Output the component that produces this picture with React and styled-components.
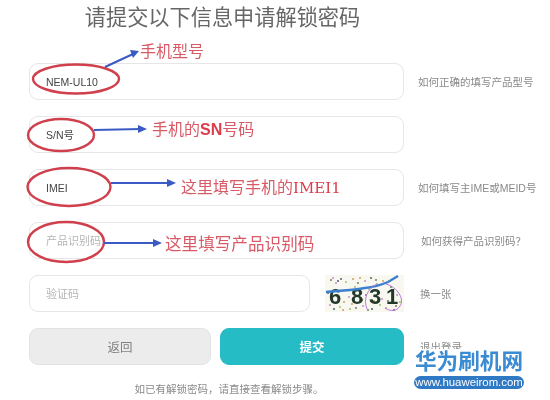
import React from 'react';
import styled, { createGlobalStyle } from 'styled-components';

const GlobalStyle = createGlobalStyle`
	html, body {
		margin: 0;
		padding: 0;
		background: #fff;
	}
	body {
		font-family: 'Liberation Sans', 'Noto Sans CJK SC', sans-serif;
	}
`;

const Page = styled.div`
	position: relative;
	width: 550px;
	height: 400px;
	overflow: hidden;
	background: #fff;
	filter: blur(0.35px);
`;

const Title = styled.h1`
	margin: 0;
	width: 445px;
	padding-top: 5px;
	height: 63px;
	box-sizing: border-box;
	text-align: center;
	font-size: 21.2px;
	line-height: 26px;
	font-weight: 400;
	color: #666;
`;

const Form = styled.form`
	display: flex;
	flex-direction: column;
	gap: 16px;
	padding-left: 29px;
`;

const Row = styled.div`
	display: flex;
	align-items: center;
	height: 37px;
`;

const Input = styled.input`
	box-sizing: border-box;
	width: ${(p) => p.$width || 375}px;
	height: 37px;
	padding: 0 16px;
	border: 1px solid #e6e6e6;
	border-radius: 9px;
	background: #fff;
	font-family: inherit;
	font-size: 10.5px;
	color: #444;
	outline: none;
	&::placeholder {
		color: #b5b5b5;
		font-size: 11px;
	}
`;

const Hint = styled.a`
	margin-left: ${(p) => p.$left || 14}px;
	font-size: 10.5px;
	color: #8a8a8a;
	white-space: nowrap;
`;

const Captcha = styled.svg`
	display: block;
	flex: none;
	margin-left: 15px;
	width: 79px;
	height: 37px;
`;

const Buttons = styled.div`
	display: flex;
	gap: 9px;
	align-items: center;
	height: 37px;
`;

const Button = styled.button`
	width: ${(p) => p.$width}px;
	height: 37px;
	padding: 0;
	border: 1px solid ${(p) => (p.$primary ? '#25bcc6' : '#e2e2e2')};
	border-radius: 9px;
	background: ${(p) => (p.$primary ? '#25bcc6' : '#ececec')};
	color: ${(p) => (p.$primary ? '#fff' : '#808080')};
	font-family: inherit;
	font-size: 12.5px;
	font-weight: ${(p) => (p.$primary ? 700 : 400)};
`;

const Note = styled.p`
	margin: 17px 0 0;
	width: 458px;
	text-align: center;
	font-size: 10.5px;
	line-height: 14px;
	color: #8a8a8a;
`;

const Markup = styled.svg`
	position: absolute;
	left: 0;
	top: 0;
	width: 550px;
	height: 400px;
	pointer-events: none;
`;

const Label = styled.span`
	position: absolute;
	left: ${(p) => p.$x}px;
	top: ${(p) => p.$y}px;
	font-size: ${(p) => p.$size || 16}px;
	line-height: 20px;
	color: #d85a66;
	white-space: nowrap;
`;

const Latin = styled.b`
	font-family: ${(p) => (p.$serif ? "'DejaVu Serif', 'Liberation Serif', serif" : "'Liberation Sans', sans-serif")};
	font-size: ${(p) => (p.$serif ? 15 : 16)}px;
	font-weight: ${(p) => (p.$serif ? 400 : 700)};
	color: #dc3c4c;
`;

const Watermark = styled.div`
	position: absolute;
	left: 414px;
	top: 349px;
	width: 110px;
	display: flex;
	flex-direction: column;
	align-items: center;
	background: #fff;
`;

const WatermarkName = styled.div`
	font-size: 21.6px;
	line-height: 25px;
	font-weight: 700;
	color: #3a8bd2;
	white-space: nowrap;
`;

const WatermarkUrl = styled.div`
	margin-top: 2px;
	width: 110px;
	height: 13px;
	border-radius: 7px;
	background: #2f78c4;
	color: #fff;
	font-size: 11.4px;
	line-height: 13px;
	text-align: center;
	white-space: nowrap;
`;

const rings = [
	{ cx: 76, cy: 79, rx: 43, ry: 14.5 },
	{ cx: 61, cy: 135, rx: 33, ry: 16 },
	{ cx: 69, cy: 187, rx: 41.5, ry: 19 },
	{ cx: 66, cy: 242, rx: 38, ry: 20 }
];

const arrows = [
	{ d: 'M105 67 L133 54', head: '139,51 130,50 133,58' },
	{ d: 'M94 130 L141 129', head: '147,129 138,125 138,133' },
	{ d: 'M111 183 L170 183', head: '176,183 167,179 167,187' },
	{ d: 'M104 243 L156 243', head: '162,243 153,239 153,247' }
];

const dots = [
	[6, 5], [11, 8], [16, 4], [21, 7], [28, 4], [33, 8], [40, 6], [46, 3], [52, 9], [58, 6], [66, 12],
	[5, 30], [9, 34], [15, 32], [27, 29], [31, 33], [38, 31], [47, 34], [55, 30], [61, 33], [71, 31],
	[24, 22], [37, 25], [44, 14], [49, 26], [63, 26], [72, 20], [3, 18], [30, 12], [19, 27], [41, 20],
	[8, 3], [13, 6], [25, 34], [35, 3], [43, 35], [57, 24], [69, 35], [75, 27], [18, 35], [51, 5]
];
const dotColors = ['#6f8458', '#c48fd0', '#4f6070', '#9cc46c', '#c8a060'];

const CaptchaImage = () => (
	<Captcha viewBox="0 0 79 37">
		<rect width="79" height="37" fill="#f8f8f1" />
		{dots.map(([x, y], i) => (
			<circle key={i} cx={x} cy={y} r="1" fill={dotColors[i % dotColors.length]} />
		))}
		<g fontFamily="'Liberation Sans', sans-serif" fontSize="22" fontWeight="700" fill="#22382a">
			<text x="4" y="29">6</text>
			<text x="26" y="29">8</text>
			<text x="44" y="29">3</text>
			<text x="61" y="29">1</text>
		</g>
		<path d="M1 17 C14 16 28 15 40 13 C50 12 56 10 63 7 L73 1" fill="none" stroke="#3a7fd0" strokeWidth="2.4" />
		<path d="M42 34 C38 24 42 14 52 9 M61 9 C72 12 80 24 75 31 C72 36 66 37 60 33" fill="none" stroke="#b67ad8" strokeWidth="1" />
	</Captcha>
);

const App = () => {
	return (
		<Page>
			<GlobalStyle />
			<Title>请提交以下信息申请解锁密码</Title>
			<Form>
				<Row>
					<Input defaultValue="NEM-UL10" />
					<Hint>如何正确的填写产品型号</Hint>
				</Row>
				<Row>
					<Input defaultValue="S/N号" />
				</Row>
				<Row>
					<Input defaultValue="IMEI" />
					<Hint>如何填写主IME或MEID号</Hint>
				</Row>
				<Row>
					<Input placeholder="产品识别码" />
					<Hint $left={17}>如何获得产品识别码？</Hint>
				</Row>
				<Row>
					<Input $width={281} placeholder="验证码" />
					<CaptchaImage />
					<Hint $left={16}>换一张</Hint>
				</Row>
				<Buttons>
					<Button type="button" $width={182}>返回</Button>
					<Button type="button" $width={184} $primary>提交</Button>
					<Hint $left={7}>退出登录</Hint>
				</Buttons>
			</Form>
			<Note>如已有解锁密码，请直接查看解锁步骤。</Note>

			<Markup viewBox="0 0 550 400">
				{rings.map((r, i) => (
					<ellipse key={i} {...r} fill="none" stroke="#cf3f4c" strokeWidth="2.4" />
				))}
				{arrows.map((a, i) => (
					<g key={i}>
						<path d={a.d} stroke="#3a5bc4" strokeWidth="2" fill="none" />
						<polygon points={a.head} fill="#3a5bc4" />
					</g>
				))}
			</Markup>

			<Label $x={140} $y={42}>手机型号</Label>
			<Label $x={152} $y={120}>手机的<Latin>SN</Latin>号码</Label>
			<Label $x={181} $y={178}>这里填写手机的<Latin $serif>IMEI1</Latin></Label>
			<Label $x={165} $y={235} $size={16.6}>这里填写产品识别码</Label>

			<Watermark>
				<WatermarkName>华为刷机网</WatermarkName>
				<WatermarkUrl>www.huaweirom.com</WatermarkUrl>
			</Watermark>
		</Page>
	);
};

export default App;
